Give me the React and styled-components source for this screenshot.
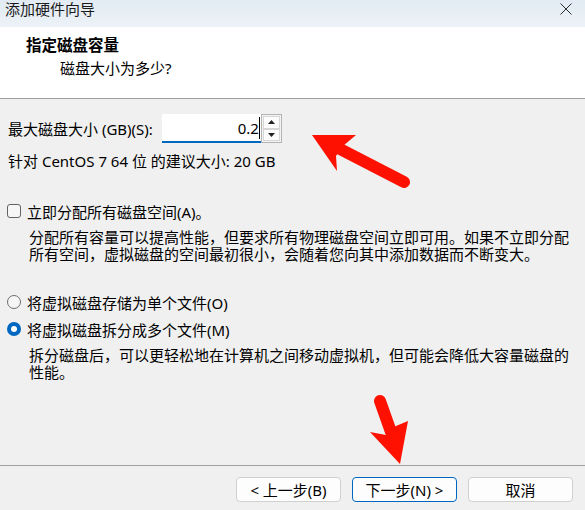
import React from 'react';
import styled, { createGlobalStyle } from 'styled-components';

const Global = createGlobalStyle`
  html, body { margin: 0; padding: 0; background: #f0f0f0; }
  body { font-family: "Noto Sans", "Noto Sans CJK SC", sans-serif; }
`;

const Window = styled.div`
  position: relative;
  width: 585px;
  height: 510px;
  overflow: hidden;
  display: flex;
  flex-direction: column;
  background: #f0f0f0;
  font-family: "Noto Sans", "Noto Sans CJK SC", sans-serif;
  font-size: 15px;
  color: #000;
`;

const TitleBar = styled.div`
  flex: none;
  height: 27px;
  box-sizing: border-box;
  padding: 0 13px 0 5px;
  display: flex;
  justify-content: space-between;
  align-items: flex-start;
  background: linear-gradient(#e2ebf3, #ecf2f7);
`;

const TitleText = styled.div`
  font-size: 15px;
  line-height: 18px;
  color: #1b1b1b;
`;

const CloseIcon = styled.svg`
  margin-top: 3px;
  width: 12px;
  height: 12px;
`;

const Header = styled.div`
  flex: none;
  height: 72px;
  box-sizing: border-box;
  background: #fff;
  border-bottom: 1px solid #a0a0a0;
  padding: 9px 0 0 26px;
`;

const HeaderTitle = styled.div`
  font-weight: 700;
  font-size: 15.5px;
  line-height: 18px;
`;

const HeaderSub = styled.div`
  margin: 5px 0 0 34px;
  line-height: 18px;
`;

const Body = styled.div`
  flex: 1;
  padding: 0 0 0 8px;
  display: flex;
  flex-direction: column;
  align-items: flex-start;
`;

const SizeRow = styled.div`
  margin-top: 15px;
  height: 29px;
  display: flex;
  align-items: center;
`;

const Label = styled.div`
  line-height: 18px;
  white-space: nowrap;
  margin-top: ${p => p.$mt || 0}px;
`;

const Field = styled.div`
  margin-left: 9px;
  width: 99px;
  height: 29px;
  box-sizing: border-box;
  background: #fff;
  border-bottom: 2px solid #0067c0;
  display: flex;
  align-items: center;
  justify-content: flex-end;
  padding-right: 1px;
  line-height: 18px;
`;

const Caret = styled.span`
  display: inline-block;
  width: 1px;
  height: 22px;
  background: #000;
`;

const Spinner = styled.div`
  width: 21px;
  height: 29px;
  box-sizing: border-box;
  border: 1px solid #b4b4b4;
  background: #f4f4f4;
  display: flex;
  flex-direction: column;
`;

const SpinBtn = styled.div`
  flex: 1;
  display: flex;
  align-items: center;
  justify-content: center;
  background: #fcfcfc;
  border: 1px solid #d6d6d6;
  margin: 0 1px;
  margin-top: ${p => (p.$down ? 0 : 1)}px;
  margin-bottom: ${p => (p.$down ? 1 : 0)}px;
`;

const OptionRow = styled.div`
  margin-top: ${p => p.$mt}px;
  height: 18px;
  display: flex;
  align-items: center;
  margin-left: -1px;
`;

const CheckBox = styled.div`
  width: 14px;
  height: 14px;
  box-sizing: border-box;
  border: 1px solid #626262;
  border-radius: 3px;
  background: #f6f6f6;
  margin-right: 6px;
`;

const Radio = styled.div`
  width: 14px;
  height: 14px;
  box-sizing: border-box;
  border-radius: 50%;
  margin-right: 6px;
  display: flex;
  align-items: center;
  justify-content: center;
  border: ${p => (p.$checked ? 'none' : '1px solid #6e6e6e')};
  background: ${p => (p.$checked ? '#0067c0' : '#f6f6f6')};
  &::after {
    content: '';
    display: ${p => (p.$checked ? 'block' : 'none')};
    width: 6px;
    height: 6px;
    border-radius: 50%;
    background: #fff;
  }
`;

const Desc = styled.div`
  margin: 9px 0 0 21px;
  white-space: nowrap;
`;

const DescLine = styled.div`
  height: 17px;
  line-height: 17px;
`;

const Footer = styled.div`
  flex: none;
  height: 45px;
  box-sizing: border-box;
  border-top: 1px solid #a0a0a0;
  padding: 11px 12px 0 0;
  display: flex;
  justify-content: flex-end;
  gap: 11px;
`;

const Button = styled.div`
  width: 105px;
  height: 25px;
  box-sizing: border-box;
  border-radius: 4px;
  background: #fdfdfd;
  border: 1px solid ${p => (p.$primary ? '#0067c0' : '#d0d0d0')};
  display: flex;
  align-items: center;
  justify-content: center;
  line-height: 18px;
  white-space: nowrap;
`;

const Overlay = styled.svg`
  position: absolute;
  left: 0;
  top: 0;
  width: 585px;
  height: 510px;
  pointer-events: none;
`;

export default function App() {
  return (
    <>
      <Global />
      <Window>
        <TitleBar>
          <TitleText>添加硬件向导</TitleText>
          <CloseIcon viewBox="0 0 12 12">
            <path d="M0.5 0.5 L11.5 11.5 M11.5 0.5 L0.5 11.5" stroke="#2b2b2b" strokeWidth="1" fill="none" />
          </CloseIcon>
        </TitleBar>
        <Header>
          <HeaderTitle>指定磁盘容量</HeaderTitle>
          <HeaderSub>磁盘大小为多少?</HeaderSub>
        </Header>
        <Body>
          <SizeRow>
            <Label>最大磁盘大小 (GB)(S):</Label>
            <Field>
              0.2
              <Caret />
            </Field>
            <Spinner>
              <SpinBtn>
                <svg width="7" height="4" viewBox="0 0 7 4"><path d="M0 4 L3.5 0 L7 4 Z" fill="#222" /></svg>
              </SpinBtn>
              <SpinBtn $down>
                <svg width="7" height="4" viewBox="0 0 7 4"><path d="M0 0 L3.5 4 L7 0 Z" fill="#222" /></svg>
              </SpinBtn>
            </Spinner>
          </SizeRow>
          <Label $mt={9}>针对 CentOS 7 64 位 的建议大小: 20 GB</Label>

          <OptionRow $mt={32}>
            <CheckBox />
            <span>立即分配所有磁盘空间(A)。</span>
          </OptionRow>
          <Desc>
            <DescLine>分配所有容量可以提高性能，但要求所有物理磁盘空间立即可用。如果不立即分配</DescLine>
            <DescLine>所有空间，虚拟磁盘的空间最初很小，会随着您向其中添加数据而不断变大。</DescLine>
          </Desc>

          <OptionRow $mt={30}>
            <Radio />
            <span>将虚拟磁盘存储为单个文件(O)</span>
          </OptionRow>
          <OptionRow $mt={9}>
            <Radio $checked />
            <span>将虚拟磁盘拆分成多个文件(M)</span>
          </OptionRow>
          <Desc>
            <DescLine>拆分磁盘后，可以更轻松地在计算机之间移动虚拟机，但可能会降低大容量磁盘的</DescLine>
            <DescLine>性能。</DescLine>
          </Desc>
        </Body>
        <Footer>
          <Button>&lt; 上一步(B)</Button>
          <Button $primary>下一步(N) &gt;</Button>
          <Button>取消</Button>
        </Footer>
        <Overlay viewBox="0 0 585 510">
          <g fill="#fe1100" stroke="none">
            <polygon points="312,135 356,135 343,146 336,156 337,171" />
            <line x1="404" y1="182" x2="340" y2="149" stroke="#fe1100" strokeWidth="12" strokeLinecap="round" />
            <polygon points="400,464 370,432 386,435 396,426 408,421" />
            <line x1="380" y1="401" x2="391" y2="432" stroke="#fe1100" strokeWidth="12" strokeLinecap="round" />
          </g>
        </Overlay>
      </Window>
    </>
  );
}
